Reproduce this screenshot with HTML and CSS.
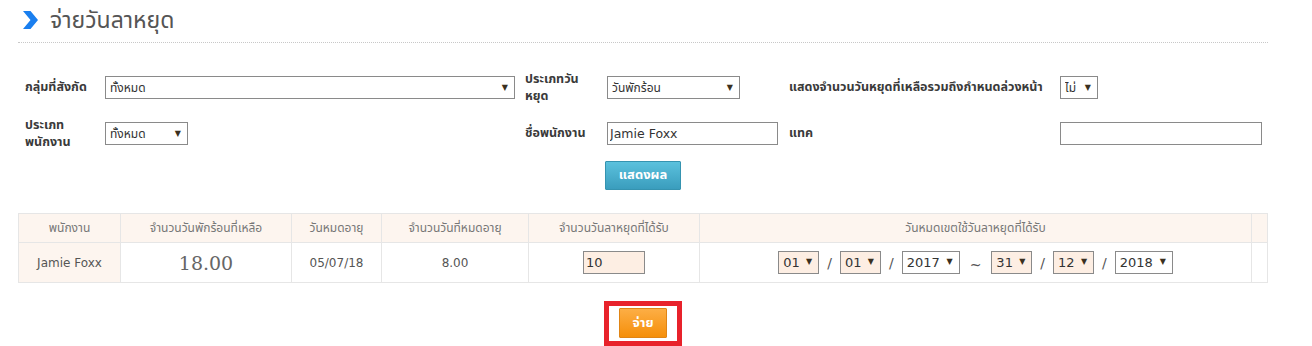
FILE: index.html
```html
<!DOCTYPE html>
<html lang="th">
<head>
    <meta charset="UTF-8">
    <title>จ่ายวันลาหยุด</title>
    <link rel="stylesheet" href="styles.css">
</head>
<body>
    <div class="page">
        <h1 class="title">
            <svg class="title-icon" width="15" height="18" viewBox="0 0 15 18">
                <path d="M0 0 L7.5 0 L15 9 L7.5 18 L0 18 L7.5 9 Z" fill="#1a7fef"/>
            </svg>
            จ่ายวันลาหยุด
        </h1>

        <form class="search">
            <label class="lbl">กลุ่มที่สังกัด</label>
            <div class="field">
                <span class="sel sel-group"><select><option>ทั้งหมด</option></select></span>
            </div>
            <label class="lbl lbl-narrow">ประเภทวันหยุด</label>
            <div class="field">
                <span class="sel sel-type"><select><option>วันพักร้อน</option></select></span>
            </div>
            <label class="lbl">แสดงจำนวนวันหยุดที่เหลือรวมถึงกำหนดล่วงหน้า</label>
            <div class="field">
                <span class="sel sel-small"><select><option>ไม่</option></select></span>
            </div>

            <label class="lbl">ประเภทพนักงาน</label>
            <div class="field">
                <span class="sel sel-emp"><select><option>ทั้งหมด</option></select></span>
            </div>
            <label class="lbl">ชื่อพนักงาน</label>
            <div class="field">
                <input type="text" class="txt txt-name" value="Jamie Foxx">
            </div>
            <label class="lbl">แทค</label>
            <div class="field">
                <input type="text" class="txt txt-tag">
            </div>

            <div class="search-btn">
                <button type="button" class="btn btn-blue">แสดงผล</button>
            </div>
        </form>

        <!-- result table -->
        <table class="grid">
            <thead>
                <tr>
                    <th class="c-emp">พนักงาน</th>
                    <th class="c-left">จำนวนวันพักร้อนที่เหลือ</th>
                    <th class="c-exp">วันหมดอายุ</th>
                    <th class="c-expn">จำนวนวันที่หมดอายุ</th>
                    <th class="c-get">จำนวนวันลาหยุดที่ได้รับ</th>
                    <th class="c-range">วันหมดเขตใช้วันลาหยุดที่ได้รับ</th>
                    <th class="c-end"></th>
                </tr>
            </thead>
            <tbody>
                <tr>
                    <td class="name">Jamie Foxx</td>
                    <td class="big">18.00</td>
                    <td>05/07/18</td>
                    <td>8.00</td>
                    <td><input type="text" class="txt txt-days" value="10"></td>
                    <td>
                        <div class="dates">
                            <span class="sel sel-d pink"><select><option>01</option></select></span>
                            <span class="sep">/</span>
                            <span class="sel sel-d pink"><select><option>01</option></select></span>
                            <span class="sep">/</span>
                            <span class="sel sel-y"><select><option>2017</option></select></span>
                            <span class="sep tilde">~</span>
                            <span class="sel sel-d pink"><select><option>31</option></select></span>
                            <span class="sep">/</span>
                            <span class="sel sel-d pink"><select><option>12</option></select></span>
                            <span class="sep">/</span>
                            <span class="sel sel-y"><select><option>2018</option></select></span>
                        </div>
                    </td>
                    <td></td>
                </tr>
            </tbody>
        </table>

        <div class="pay">
            <div class="pay-mark">
                <button type="button" class="btn btn-orange">จ่าย</button>
            </div>
        </div>
    </div>
</body>
</html>
```

FILE: styles.css
```css
body {
    margin: 0;
    font-family: Tahoma, "Noto Sans Thai", "Loma", "Garuda", "DejaVu Sans", sans-serif;
    font-size: 12px;
    color: #444;
    background: #fff;
}

.page {
    padding: 0 44px 0 18px;
}

.title {
    display: flex;
    align-items: center;
    gap: 12px;
    margin: 0;
    height: 42px;
    padding-left: 5px;
    font-size: 23px;
    font-weight: normal;
    color: #555;
    border-bottom: 1px dotted #c8c8c8;
}

.title-icon {
    flex: none;
    margin-top: -2px;
}

/* search form */
.search {
    display: grid;
    grid-template-columns: 80px 420px 82px 182px 271px 1fr;
    grid-auto-rows: 23px;
    row-gap: 23px;
    align-items: center;
    margin-top: 33px;
    padding-left: 7px;
}

.lbl {
    font-weight: bold;
    font-size: 12.5px;
    color: #3a3a3a;
    line-height: 17px;
    padding-right: 6px;
}

.lbl-narrow {
    max-width: 62px;
}

.field {
    display: flex;
}

.sel {
    position: relative;
    display: inline-block;
    height: 23px;
    border: 1px solid #8a8a8a;
    box-sizing: border-box;
    background: #fff;
}

.sel select {
    appearance: none;
    -webkit-appearance: none;
    border: none;
    background: transparent;
    width: 100%;
    height: 21px;
    padding: 0 0 0 4px;
    margin: 0;
    font-family: inherit;
    font-size: 12px;
    color: #333;
    outline: none;
}

.sel::after {
    content: "▼";
    position: absolute;
    right: 6px;
    top: 5px;
    font-size: 8px;
    color: #3a3020;
    pointer-events: none;
}

.sel-group { width: 410px; }
.sel-type { width: 133px; }
.sel-small { width: 38px; }
.sel-emp { width: 83px; }

.txt {
    height: 23px;
    box-sizing: border-box;
    border: 1px solid #8a8a8a;
    padding: 0 2px;
    font-family: "DejaVu Sans", Verdana, sans-serif;
    font-size: 12.5px;
    color: #333;
    outline: none;
}

.txt-name { width: 171px; }
.txt-tag { width: 202px; }

.search-btn {
    grid-column: 4;
    margin-left: -2px;
    margin-top: -9px;
}

.btn {
    border: 1px solid;
    border-radius: 1px;
    color: #fff;
    font-family: inherit;
    font-weight: bold;
    font-size: 13px;
    cursor: pointer;
}

.btn-blue {
    width: 76px;
    height: 29px;
    background: linear-gradient(#5bc1dd, #3a9dbd);
    border-color: #3593b0;
}

.btn-orange {
    width: 48px;
    height: 30px;
    background: linear-gradient(#fdae45, #f58f0a);
    border-color: #e08515;
}

/* result table */
.grid {
    width: 1250px;
    margin-top: 22px;
    border-collapse: collapse;
    text-align: center;
}

.grid th,
.grid td {
    border: 1px solid #e6e6e6;
}

.grid th {
    height: 28px;
    padding: 0;
    background: #fdf5ef;
    font-weight: normal;
    color: #777;
}

.grid td {
    height: 39px;
    padding: 0;
    color: #555;
    font-family: "DejaVu Sans", Verdana, sans-serif;
    font-size: 12px;
}

.grid td.name {
    background: #fdf5ef;
}

.grid td.big {
    font-family: "DejaVu Serif", serif;
    font-size: 19px;
    color: #666;
}

.c-emp { width: 101px; }
.c-left { width: 170px; }
.c-exp { width: 89px; }
.c-expn { width: 146px; }
.c-get { width: 170px; }
.c-end { width: 15px; }

.txt-days {
    width: 62px;
    background: #fdeee3;
    font-size: 13px;
    vertical-align: middle;
}

.dates {
    display: flex;
    justify-content: center;
    align-items: center;
    gap: 8px;
}

.sel-d { width: 41px; }
.sel-y { width: 58px; }

.dates .sel select {
    font-family: "DejaVu Sans", Verdana, sans-serif;
    font-size: 13px;
    color: #333;
}

.pink { background: #fdeee3; }

.sep {
    color: #555;
    font-size: 14px;
}

.tilde {
    font-size: 14px;
    padding: 4px 2px 0;
}

/* pay */
.pay {
    display: flex;
    justify-content: center;
    margin-top: 18px;
}

.pay-mark {
    width: 78px;
    height: 45px;
    box-sizing: border-box;
    border: 5px solid #e8222b;
    display: flex;
    justify-content: center;
    align-items: flex-start;
    padding-top: 2px;
}
```
